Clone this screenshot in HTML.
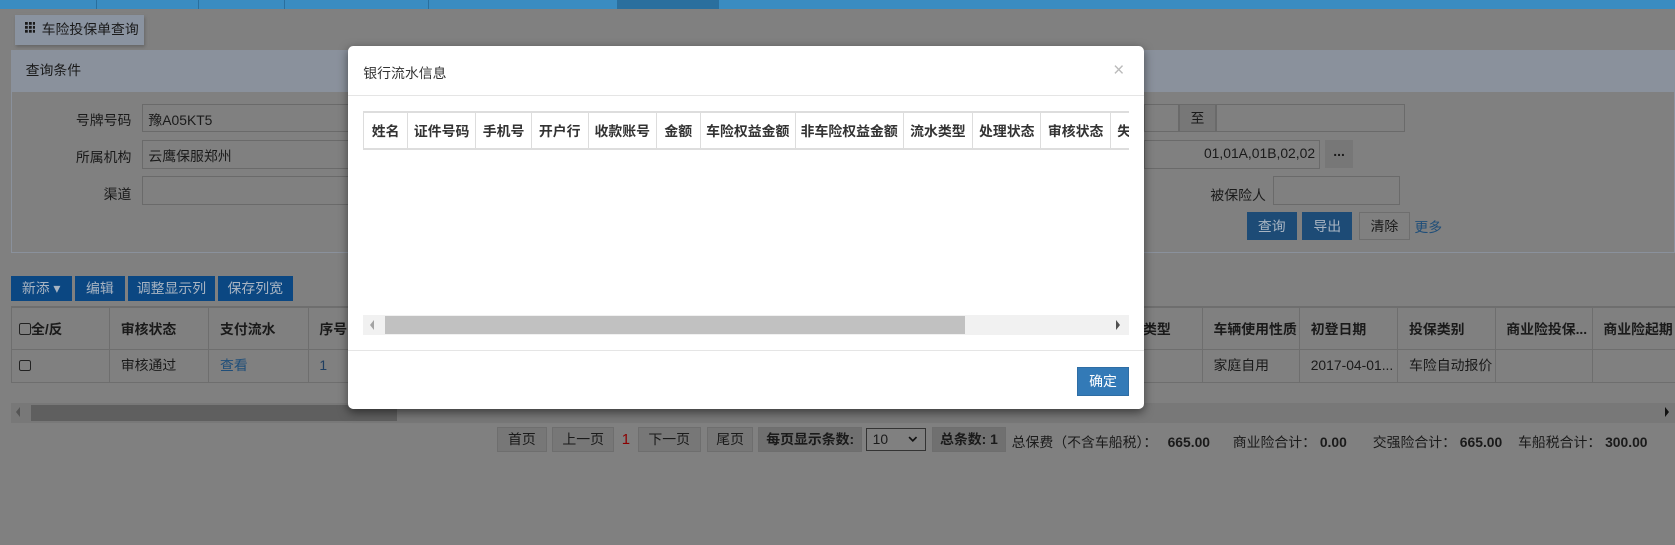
<!DOCTYPE html>
<html><head><meta charset="utf-8"><style>
html{zoom:1.06824}
body{margin:0;width:1568px;height:510px;overflow:hidden;background:#808080;font-family:"Liberation Sans","Noto Sans CJK SC",sans-serif;font-size:13px;color:#1a1a1a;position:relative}
.a{position:absolute;box-sizing:border-box;white-space:nowrap}
.inp{border:1px solid #6a6a6a;background:#808080;height:27px}
.lbl{text-align:right;width:80px}
.btn{background:#0b4782;color:#a8b4c2;text-align:center;line-height:24px;height:24px}
.th{font-weight:bold;border-right:1px solid #6e6e6e;padding-left:10px;line-height:40px;height:40px}
.td{border-right:1px solid #6e6e6e;padding-left:10px;line-height:31px;height:31px}
.pg{background:#777;border:1px solid #6e6e6e;height:23px;line-height:21px;text-align:center;color:#1a1a1a}
.mh{font-weight:bold;border-right:1px solid #ddd;line-height:34px;height:34px;text-align:center;color:#333}
.cb{display:inline-block;width:11px;height:11px;border:1px solid #222;border-radius:2px;vertical-align:-1px;box-sizing:border-box}
</style></head><body>
<div class="a" style="left:0;top:0;width:1568px;height:8px;background:#3a8cc1"></div>
<div class="a" style="left:578px;top:0;width:95px;height:8px;background:#2a6f9e"></div>
<div class="a" style="left:90px;top:0;width:1px;height:8px;background:#2a6f9e"></div>
<div class="a" style="left:185px;top:0;width:1px;height:8px;background:#2a6f9e"></div>
<div class="a" style="left:266px;top:0;width:1px;height:8px;background:#2a6f9e"></div>
<div class="a" style="left:401px;top:0;width:1px;height:8px;background:#2a6f9e"></div>
<div class="a" style="left:14px;top:14px;width:121px;height:28px;background:#8a93a0;box-shadow:1px 2px 3px #666;line-height:28px;padding-left:25px;color:#1a1a1a">车险投保单查询</div>
<svg class="a" style="left:23px;top:21px" width="10" height="10"><g fill="#1a1a1a"><rect x="0" y="0" width="2.6" height="2.6"/><rect x="3.7" y="0" width="2.6" height="2.6"/><rect x="7.4" y="0" width="2.6" height="2.6"/><rect x="0" y="3.7" width="2.6" height="2.6"/><rect x="3.7" y="3.7" width="2.6" height="2.6"/><rect x="7.4" y="3.7" width="2.6" height="2.6"/><rect x="0" y="7.4" width="2.6" height="2.6"/><rect x="3.7" y="7.4" width="2.6" height="2.6"/><rect x="7.4" y="7.4" width="2.6" height="2.6"/></g></svg>
<div class="a" style="left:10px;top:47px;width:1558px;height:190px;border:1px solid #8a919c"></div>
<div class="a" style="left:10px;top:47px;width:1558px;height:39px;background:#8a919c;line-height:39px;padding-left:14px">查询条件</div>
<div class="a lbl" style="left:43px;top:102px">号牌号码</div>
<div class="a inp" style="left:133px;top:97px;width:200px;padding:4px 5px">豫A05KT5</div>
<div class="a lbl" style="left:43px;top:137px">所属机构</div>
<div class="a inp" style="left:133px;top:131px;width:200px;padding:4px 5px">云鹰保服郑州</div>
<div class="a lbl" style="left:43px;top:171px">渠道</div>
<div class="a inp" style="left:133px;top:165px;width:200px"></div>
<div class="a inp" style="left:1071px;top:97px;width:33px"></div>
<div class="a inp" style="left:1104px;top:97px;width:34px;background:#777;text-align:center;line-height:25px">至</div>
<div class="a inp" style="left:1138px;top:97px;width:177px"></div>
<div class="a inp" style="left:1071px;top:131px;width:165px;padding:4px 0;text-align:right;padding-right:4px">01,01A,01B,02,02</div>
<div class="a" style="left:1240px;top:131px;width:27px;height:26px;background:#777;text-align:center;line-height:22px;font-weight:bold">...</div>
<div class="a" style="left:1133px;top:172px">被保险人</div>
<div class="a inp" style="left:1192px;top:165px;width:119px"></div>
<div class="a btn" style="left:1167px;top:198px;width:47px;height:27px;line-height:27px;background:#1d4b76">查询</div>
<div class="a btn" style="left:1219px;top:198px;width:47px;height:27px;line-height:27px;background:#1d4b76">导出</div>
<div class="a" style="left:1272px;top:198px;width:48px;height:27px;line-height:25px;text-align:center;border:1px solid #6e6e6e">清除</div>
<div class="a" style="left:1324px;top:202px;color:#1f4e79">更多</div>
<div class="a btn" style="left:10px;top:258px;width:57px">新添 ▾</div>
<div class="a btn" style="left:70px;top:258px;width:47px">编辑</div>
<div class="a btn" style="left:120px;top:258px;width:81px">调整显示列</div>
<div class="a btn" style="left:204px;top:258px;width:70px">保存列宽</div>
<div class="a" style="left:10px;top:286px;width:1558px;height:73px;border-top:2px solid #6e6e6e;border-left:1px solid #6e6e6e"></div>
<div class="a" style="left:10px;top:327px;width:1558px;height:1px;background:#6e6e6e"></div>
<div class="a" style="left:10px;top:358px;width:1558px;height:1px;background:#6e6e6e"></div>
<div class="a th" style="left:10px;top:288px;width:93px;padding-left:8px"><span class="cb"></span>全/反</div>
<div class="a th" style="left:103px;top:288px;width:93px">审核状态</div>
<div class="a th" style="left:196px;top:288px;width:93px">支付流水</div>
<div class="a th" style="left:289px;top:288px;width:40px">序号</div>
<div class="a th" style="left:1060px;top:288px;width:66px;padding-left:10px">类型</div>
<div class="a th" style="left:1126px;top:288px;width:91px">车辆使用性质</div>
<div class="a th" style="left:1217px;top:288px;width:92px">初登日期</div>
<div class="a th" style="left:1309px;top:288px;width:91px">投保类别</div>
<div class="a th" style="left:1400px;top:288px;width:91px">商业险投保...</div>
<div class="a th" style="left:1491px;top:288px;width:77px;border:0">商业险起期</div>
<div class="a td" style="left:10px;top:327px;width:93px;padding-left:8px"><span class="cb"></span></div>
<div class="a td" style="left:103px;top:327px;width:93px">审核通过</div>
<div class="a td" style="left:196px;top:327px;width:93px;color:#1f4e79">查看</div>
<div class="a td" style="left:289px;top:327px;width:40px;color:#1f3e60">1</div>
<div class="a td" style="left:1060px;top:327px;width:66px"></div>
<div class="a td" style="left:1126px;top:327px;width:91px">家庭自用</div>
<div class="a td" style="left:1217px;top:327px;width:92px">2017-04-01...</div>
<div class="a td" style="left:1309px;top:327px;width:91px">车险自动报价</div>
<div class="a td" style="left:1400px;top:327px;width:91px"></div>
<div class="a" style="left:10px;top:377px;width:1558px;height:19px;background:#787878"></div>
<div class="a" style="left:29px;top:379px;width:343px;height:15px;background:#5f5f5f"></div>
<div class="a" style="left:15px;top:381px;width:0;height:0;border:5px solid transparent;border-right:4px solid #555;border-left:0"></div>
<div class="a" style="left:1559px;top:381px;width:0;height:0;border:5px solid transparent;border-left:4px solid #111;border-right:0"></div>
<div class="a pg" style="left:465px;top:400px;width:47px">首页</div>
<div class="a pg" style="left:517px;top:400px;width:58px">上一页</div>
<div class="a" style="left:582px;top:403px;color:#8b0000;font-size:14px">1</div>
<div class="a pg" style="left:597px;top:400px;width:59px">下一页</div>
<div class="a pg" style="left:662px;top:400px;width:43px">尾页</div>
<div class="a pg" style="left:710px;top:400px;width:97px;font-weight:bold;background:#707070">每页显示条数:</div>
<div class="a" style="left:811px;top:401px;width:56px;height:21px;border:1px solid #333;line-height:19px;padding-left:5px">10</div>
<svg class="a" style="left:850px;top:408px" width="9" height="6"><path d="M1 1L4.5 4.5L8 1" stroke="#111" stroke-width="1.6" fill="none"/></svg>
<div class="a pg" style="left:872px;top:400px;width:70px;font-weight:bold;background:#707070">总条数: 1</div>
<div class="a" style="left:947px;top:403px">总保费（不含车船税）： <b style="margin-left:6px">665.00</b></div>
<div class="a" style="left:1154px;top:403px">商业险合计： <b>0.00</b></div>
<div class="a" style="left:1285px;top:403px">交强险合计： <b>665.00</b></div>
<div class="a" style="left:1421px;top:403px">车船税合计： <b>300.00</b></div>
<div class="a" style="left:326px;top:43px;width:745px;height:340px;background:#fff;border-radius:5px;box-shadow:0 3px 9px rgba(0,0,0,.5)"></div>
<div class="a" style="left:340px;top:58px;color:#333">银行流水信息</div>
<div class="a" style="left:1042px;top:56px;color:#bbb;font-size:18px">×</div>
<div class="a" style="left:326px;top:89px;width:745px;height:1px;background:#e5e5e5"></div>
<div class="a" style="left:340px;top:104px;width:717px;height:36px;border-top:2px solid #ddd;border-bottom:2px solid #ddd;border-left:1px solid #ddd;overflow:hidden">
<div class="a mh" style="left:0;top:0;width:41px">姓名</div>
<div class="a mh" style="left:41px;top:0;width:64px">证件号码</div>
<div class="a mh" style="left:105px;top:0;width:52px">手机号</div>
<div class="a mh" style="left:157px;top:0;width:53px">开户行</div>
<div class="a mh" style="left:210px;top:0;width:64px">收款账号</div>
<div class="a mh" style="left:274px;top:0;width:41px">金额</div>
<div class="a mh" style="left:315px;top:0;width:89px">车险权益金额</div>
<div class="a mh" style="left:404px;top:0;width:101px">非车险权益金额</div>
<div class="a mh" style="left:505px;top:0;width:65px">流水类型</div>
<div class="a mh" style="left:570px;top:0;width:64px">处理状态</div>
<div class="a mh" style="left:634px;top:0;width:65px">审核状态</div>
<div class="a mh" style="left:699px;top:0;width:40px;text-align:left;padding-left:6px">失败</div>
</div>
<div class="a" style="left:340px;top:295px;width:717px;height:19px;background:#f1f1f1"></div>
<div class="a" style="left:360px;top:296px;width:543px;height:17px;background:#c1c1c1"></div>
<div class="a" style="left:346px;top:300px;width:0;height:0;border:5px solid transparent;border-right:4px solid #a3a3a3;border-left:0"></div>
<div class="a" style="left:1045px;top:300px;width:0;height:0;border:5px solid transparent;border-left:4px solid #505050;border-right:0"></div>
<div class="a" style="left:326px;top:328px;width:745px;height:1px;background:#e5e5e5"></div>
<div class="a" style="left:1008px;top:344px;width:49px;height:27px;background:#337ab7;border:1px solid #2e6da4;color:#fff;text-align:center;line-height:25px">确定</div>
</body></html>
